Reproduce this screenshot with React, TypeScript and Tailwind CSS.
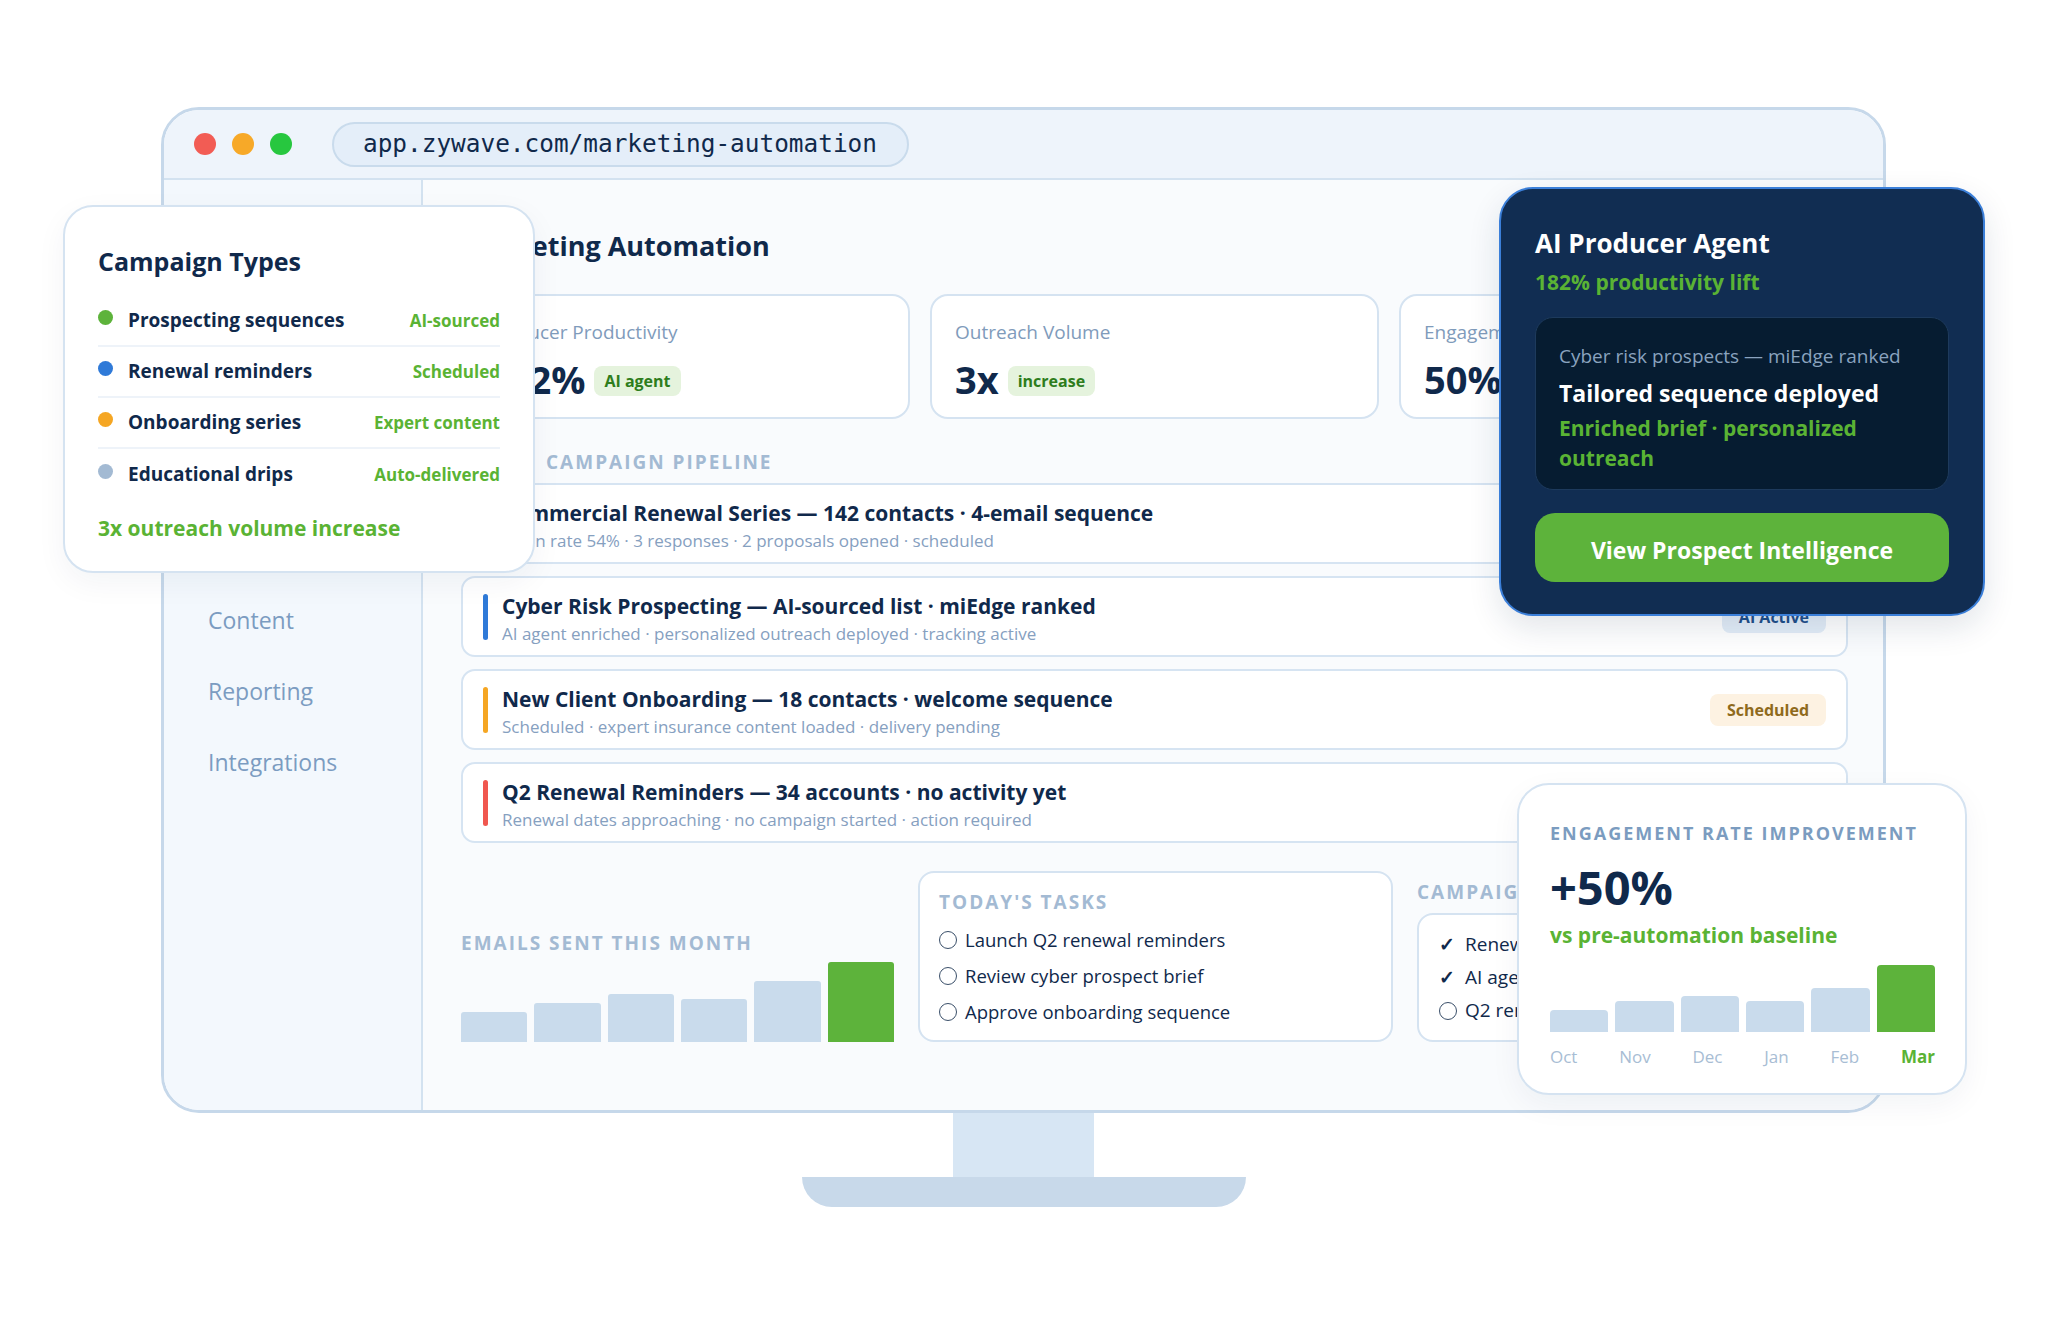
import React from 'react'

const SANS = "font-['Open_Sans',sans-serif]"

const NAV = ['Dashboard', 'Campaigns', 'Contacts', 'Sequences', 'Automation', 'Content', 'Reporting', 'Integrations']

const STATS = [
  { label: 'Producer Productivity', value: '182%', badge: 'AI agent' },
  { label: 'Outreach Volume', value: '3x', badge: 'increase' },
  { label: 'Engagement Rate', value: '50%', badge: 'improvement' },
]

const PIPELINE = [
  {
    bar: 'bg-[#5db33b]',
    title: 'Commercial Renewal Series — 142 contacts · 4-email sequence',
    sub: 'Open rate 54% · 3 responses · 2 proposals opened · scheduled',
    badge: 'Active',
    badgeCls: 'bg-[#e5f3dd] text-[#2e7d1c]',
  },
  {
    bar: 'bg-[#2f7ad8]',
    title: 'Cyber Risk Prospecting — AI-sourced list · miEdge ranked',
    sub: 'AI agent enriched · personalized outreach deployed · tracking active',
    badge: 'AI Active',
    badgeCls: 'bg-[#e3edf8] text-[#1f4f8a]',
  },
  {
    bar: 'bg-[#f5a623]',
    title: 'New Client Onboarding — 18 contacts · welcome sequence',
    sub: 'Scheduled · expert insurance content loaded · delivery pending',
    badge: 'Scheduled',
    badgeCls: 'bg-[#fdf2e2] text-[#8f6a1c]',
  },
  {
    bar: 'bg-[#f0574f]',
    title: 'Q2 Renewal Reminders — 34 accounts · no activity yet',
    sub: 'Renewal dates approaching · no campaign started · action required',
    badge: 'Action Needed',
    badgeCls: 'bg-[#fde8e7] text-[#b3312a]',
  },
]

const EMAIL_BARS = [30, 39, 48, 43, 61, 80]

const TASKS = ['Launch Q2 renewal reminders', 'Review cyber prospect brief', 'Approve onboarding sequence']

const CHECKLIST = [
  { done: true, text: 'Renewal series launched' },
  { done: true, text: 'AI agent list enriched' },
  { done: false, text: 'Q2 renewal campaign' },
]

const CAMPAIGN_TYPES = [
  { dot: 'bg-[#5db33b]', name: 'Prospecting sequences', tag: 'AI-sourced' },
  { dot: 'bg-[#2f7ad8]', name: 'Renewal reminders', tag: 'Scheduled' },
  { dot: 'bg-[#f5a623]', name: 'Onboarding series', tag: 'Expert content' },
  { dot: 'bg-[#a3bad3]', name: 'Educational drips', tag: 'Auto-delivered' },
]

const ENGAGEMENT = [
  { m: 'Oct', h: 22 },
  { m: 'Nov', h: 31 },
  { m: 'Dec', h: 36 },
  { m: 'Jan', h: 31 },
  { m: 'Feb', h: 44 },
  { m: 'Mar', h: 67 },
]

const SECTION_LABEL = 'text-[19px] leading-[24px] font-bold tracking-[2px] uppercase text-[#a3bad3]'

function Radio() {
  return <span className="w-[18px] h-[18px] rounded-full border-[1.5px] border-[#3a4f69] flex-shrink-0" />
}

function Monitor() {
  return (
    <div className="pt-[107px] pl-[161px]">
      <div className="w-[1725px] h-[1006px] border-[3px] border-[#c6d8ea] rounded-[38px] overflow-hidden bg-white flex flex-col">
        {/* title bar */}
        <div className="h-[70px] flex-shrink-0 bg-[#eef4fb] border-b-2 border-[#d3e2f0] flex items-center pl-[30px]">
          <div className="flex gap-[16px]">
            <span className="w-[22px] h-[22px] rounded-full bg-[#f25c54]" />
            <span className="w-[22px] h-[22px] rounded-full bg-[#f7a928]" />
            <span className="w-[22px] h-[22px] rounded-full bg-[#27c73f]" />
          </div>
          <div className="ml-[40px] w-[577px] h-[45px] rounded-full bg-[#e4eef9] border-2 border-[#c9dbec] flex items-center pl-[29px]">
            <span className="font-['DejaVu_Sans_Mono',monospace] text-[24.4px] text-[#10294b] leading-none">
              app.zywave.com/marketing-automation
            </span>
          </div>
        </div>

        <div className="flex-1 flex min-h-0">
          {/* sidebar */}
          <div className="w-[259px] flex-shrink-0 bg-[#f3f8fd] border-r-2 border-[#d3e2f0] pt-[50px] pl-[44px]">
            {NAV.map((n) => (
              <div key={n} className="h-[71px] flex items-center text-[23px] text-[#7b9cc1]">
                {n}
              </div>
            ))}
          </div>

          {/* main */}
          <div className="flex-1 bg-[#f9fbfd] pl-[38px] pr-[35px] pt-[48px]">
            <h1 className="text-[27px] leading-[36px] font-bold text-[#10294b]">Marketing Automation</h1>

            <div className="mt-[30px] grid grid-cols-3 gap-[20px]">
              {STATS.map((s) => (
                <div key={s.label} className="h-[125px] bg-white border-2 border-[#d5e3f1] rounded-[18px] pl-[23px] pt-[23px]">
                  <div className="text-[19px] leading-[26px] text-[#7f9bbb]">{s.label}</div>
                  <div className="mt-[11px] flex items-center gap-[9px]">
                    <span className="text-[38px] leading-[46px] font-bold text-[#10294b]">{s.value}</span>
                    <span className="mt-[4px] h-[30px] px-[10px] rounded-[8px] bg-[#e5f3dd] text-[#2e7d1c] text-[16px] font-bold flex items-center">
                      {s.badge}
                    </span>
                  </div>
                </div>
              ))}
            </div>

            <div className={`mt-[31px] ml-[85px] ${SECTION_LABEL}`}>Campaign Pipeline</div>

            <div className="mt-[9px] flex flex-col gap-[12px]">
              {PIPELINE.map((p) => (
                <div key={p.title} className="h-[81px] bg-white border-2 border-[#d6e4f2] rounded-[14px] flex items-center pl-[20px] pr-[20px]">
                  <span className={`w-[5px] h-[46px] rounded-full ${p.bar}`} />
                  <div className="ml-[14px] flex-1 pt-[3px]">
                    <div className="text-[21px] leading-[28px] font-bold text-[#10294b]">{p.title}</div>
                    <div className="mt-[3px] text-[17px] leading-[22px] text-[#86a0bf]">{p.sub}</div>
                  </div>
                  <span className={`h-[32px] px-[17px] rounded-[8px] text-[16px] font-bold flex items-center ${p.badgeCls}`}>
                    {p.badge}
                  </span>
                </div>
              ))}
            </div>

            <div className="mt-[28px] flex items-end gap-[24px]">
              <div className="w-[433px]">
                <div className={SECTION_LABEL}>Emails Sent This Month</div>
                <div className="mt-[7px] h-[80px] flex items-end gap-[7px]">
                  {EMAIL_BARS.map((h, i) => (
                    <div
                      key={i}
                      className={`flex-1 rounded-t-[3px] ${i === EMAIL_BARS.length - 1 ? 'bg-[#5db33b]' : 'bg-[#c9dbec]'}`}
                      style={{ height: h }}
                    />
                  ))}
                </div>
              </div>

              <div className="w-[475px] h-[171px] bg-white border-2 border-[#d5e3f1] rounded-[16px] pl-[19px] pt-[17px]">
                <div className={SECTION_LABEL}>Today's Tasks</div>
                <div className="mt-[8px]">
                  {TASKS.map((t) => (
                    <div key={t} className="h-[36px] flex items-center gap-[8px] text-[18.5px] text-[#10294b]">
                      <Radio />
                      {t}
                    </div>
                  ))}
                </div>
              </div>

              <div className="flex-1">
                <div className={SECTION_LABEL}>Campaign Checklist</div>
                <div className="mt-[9px] h-[129px] bg-white border-2 border-[#d5e3f1] rounded-[16px] pl-[20px] pt-[13px]">
                  {CHECKLIST.map((c) => (
                    <div key={c.text} className="h-[33px] flex items-center gap-[8px] text-[19px] text-[#10294b]">
                      {c.done ? <span className="w-[18px] text-[19px] font-bold leading-none">✓</span> : <Radio />}
                      {c.text}
                    </div>
                  ))}
                </div>
              </div>
            </div>
          </div>
        </div>
      </div>

      {/* stand */}
      <div className="ml-[792px] w-[141px] h-[64px] bg-[#d7e6f4]" />
      <div className="ml-[641px] w-[444px] h-[30px] bg-[#c8d9ea] rounded-b-[32px]" />
    </div>
  )
}

function CampaignTypesCard() {
  return (
    <div className="absolute left-[63px] top-[205px] w-[472px] h-[368px] bg-white border-2 border-[#d5e3f1] rounded-[30px] shadow-[0_10px_30px_rgba(16,41,75,0.05)] pl-[33px] pr-[33px] pt-[37px]">
      <div className="text-[25px] leading-[34px] font-bold text-[#10294b]">Campaign Types</div>
      <div className="mt-[18px]">
        {CAMPAIGN_TYPES.map((c, i) => (
          <div
            key={c.name}
            className={`h-[51px] flex items-center ${i < CAMPAIGN_TYPES.length - 1 ? 'border-b-2 border-[#eef3f9]' : ''}`}
          >
            <span className={`w-[15px] h-[15px] rounded-full -mt-[6px] ${c.dot}`} />
            <span className="ml-[15px] text-[19px] font-bold text-[#10294b]">{c.name}</span>
            <span className="ml-auto text-[17px] font-bold text-[#5ab334]">{c.tag}</span>
          </div>
        ))}
      </div>
      <div className="mt-[14px] text-[21px] leading-[28px] font-bold text-[#5ab334]">3x outreach volume increase</div>
    </div>
  )
}

function AgentCard() {
  return (
    <div className="absolute left-[1499px] top-[187px] w-[486px] h-[429px] bg-[#112d52] border-2 border-[#3b7fd9] rounded-[34px] shadow-[0_12px_32px_rgba(16,41,75,0.12)] px-[34px] pt-[37px]">
      <div className="text-[26px] leading-[34px] font-bold text-white">AI Producer Agent</div>
      <div className="mt-[8px] text-[21px] leading-[28px] font-bold text-[#5ab334]">182% productivity lift</div>
      <div className="mt-[21px] h-[173px] bg-[#061c31] border border-[#1d3a5c] rounded-[18px] pl-[23px] pr-[20px] pt-[26px]">
        <div className="text-[19px] leading-[24px] text-[#8aa3bf]">Cyber risk prospects — miEdge ranked</div>
        <div className="mt-[10px] text-[23px] leading-[30px] font-bold text-white">Tailored sequence deployed</div>
        <div className="mt-[5px] text-[21px] leading-[30px] font-bold text-[#5ab334]">Enriched brief · personalized outreach</div>
      </div>
      <div className="mt-[23px] h-[69px] rounded-[20px] bg-[#5db33b] flex items-center justify-center pt-[6px] text-[23px] font-bold text-white">
        View Prospect Intelligence
      </div>
    </div>
  )
}

function EngagementCard() {
  return (
    <div className="absolute left-[1517px] top-[783px] w-[450px] h-[312px] bg-white border-2 border-[#d5e3f1] rounded-[32px] shadow-[0_10px_30px_rgba(16,41,75,0.05)] pl-[31px] pr-[30px] pt-[36px]">
      <div className="text-[18px] leading-[24px] font-bold tracking-[2px] uppercase text-[#7b9cc0]">
        Engagement Rate Improvement
      </div>
      <div className="mt-[16px] text-[47px] leading-[52px] font-bold text-[#10294b]">+50%</div>
      <div className="mt-[8px] text-[21px] leading-[28px] font-bold text-[#5ab334]">vs pre-automation baseline</div>
      <div className="mt-[16px] h-[67px] flex items-end gap-[7px]">
        {ENGAGEMENT.map((e, i) => (
          <div
            key={e.m}
            className={`flex-1 rounded-t-[4px] ${i === ENGAGEMENT.length - 1 ? 'bg-[#5db33b]' : 'bg-[#c9dbec]'}`}
            style={{ height: e.h }}
          />
        ))}
      </div>
      <div className="mt-[13px] flex justify-between text-[17px] leading-[24px]">
        {ENGAGEMENT.map((e, i) => (
          <span key={e.m} className={i === ENGAGEMENT.length - 1 ? 'font-bold text-[#5ab334]' : 'text-[#a8bdd4]'}>
            {e.m}
          </span>
        ))}
      </div>
    </div>
  )
}

export default function App() {
  return (
    <div className={`relative w-[2048px] h-[1332px] bg-white overflow-hidden ${SANS}`}>
      <Monitor />
      <CampaignTypesCard />
      <AgentCard />
      <EngagementCard />
    </div>
  )
}
